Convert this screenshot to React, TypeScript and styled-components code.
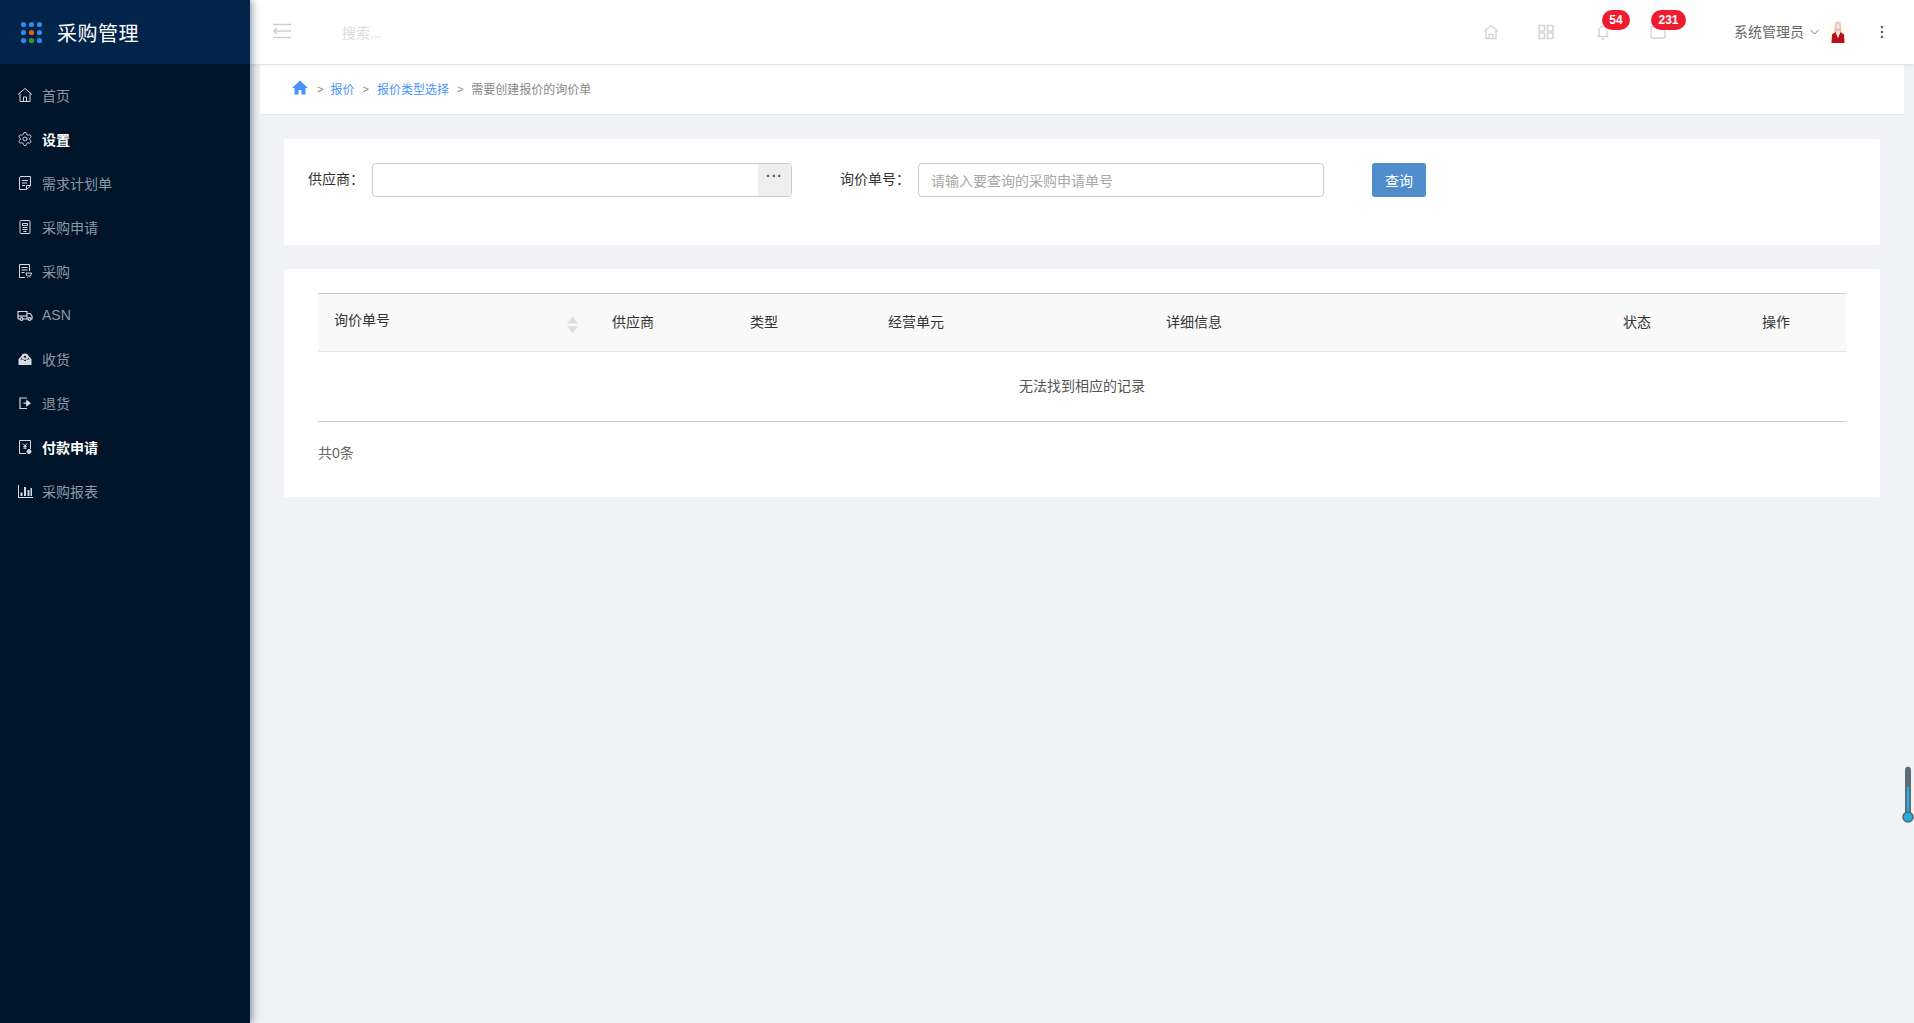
import React from "react";
import styled, { createGlobalStyle } from "styled-components";
import { Settings } from "lucide-react";

const GlobalStyle = createGlobalStyle`
  html, body, #root {
    margin: 0;
    padding: 0;
    height: 100%;
  }
  body {
    background: #f0f2f5;
    font-family: "Liberation Sans", "Noto Sans CJK SC", sans-serif;
    font-size: 14px;
    color: #333;
    overflow: hidden;
  }
  * {
    box-sizing: border-box;
  }
`;

const Page = styled.div`
  display: flex;
  height: 1023px;
  width: 1914px;
  overflow: hidden;
`;

const Sidebar = styled.aside`
  flex: 0 0 250px;
  background: #00152a;
  box-shadow: 2px 0 8px rgba(0, 21, 42, 0.45);
  position: relative;
  z-index: 3;
`;

const Logo = styled.div`
  height: 64px;
  background: #02234a;
  display: flex;
  align-items: center;
  padding-left: 20px;
  gap: 14px;
`;

const LogoTitle = styled.span`
  color: #fff;
  font-size: 20px;
  letter-spacing: 0.5px;
`;

const Menu = styled.nav`
  display: flex;
  flex-direction: column;
  padding-top: 9px;
`;

const MenuItem = styled.a<{ $active?: boolean }>`
  height: 44px;
  display: flex;
  align-items: center;
  padding-left: 17px;
  gap: 9px;
  font-size: 14px;
  color: ${(p) => (p.$active ? "#fff" : "#8d99a6")};
  font-weight: ${(p) => (p.$active ? 700 : 400)};

  svg {
    flex: none;
    width: 16px;
    height: 16px;
    color: #d5dae0;
  }
`;

const Main = styled.main`
  flex: 1;
  min-width: 0;
  display: flex;
  flex-direction: column;
`;

const Header = styled.header`
  height: 64px;
  background: #fff;
  box-shadow: 0 1px 3px rgba(0, 0, 0, 0.08);
  display: flex;
  align-items: center;
  padding-left: 23px;
  position: relative;
  z-index: 2;
`;

const Toggle = styled.svg`
  width: 18px;
  height: 16px;
  margin-top: -2px;
  color: #cfcfcf;
`;

const Search = styled.span`
  margin-left: 51px;
  color: #dcdcdc;
  font-size: 14px;
`;

const HeaderRight = styled.div`
  margin-left: auto;
  display: flex;
  align-items: center;
  height: 100%;
  padding-right: 30px;
`;

const HeadIcon = styled.div<{ $width: number }>`
  position: relative;
  width: ${(p) => p.$width}px;
  height: 20px;
  display: flex;
  align-items: center;

  svg {
    width: 16px;
    height: 16px;
    color: #d2d2d2;
  }
`;

const Badge = styled.span`
  position: absolute;
  left: 7px;
  top: -12px;
  height: 20px;
  min-width: 28px;
  padding: 0 7px;
  border-radius: 10px;
  background: #ee1c2e;
  color: #fff;
  font-size: 12px;
  font-weight: 700;
  line-height: 20px;
  text-align: center;
`;

const WideBadge = styled(Badge)`
  left: 1px;
  min-width: 35px;
`;

const UserName = styled.span`
  color: #666;
  font-size: 14px;
  margin: -2px 0 0 15px;
`;

const Chevron = styled.svg`
  width: 9px;
  height: 6px;
  margin-left: 6px;
  color: #777;
`;

const Avatar = styled.svg`
  width: 24px;
  height: 24px;
  margin-left: 7px;
`;

const MoreDots = styled.svg`
  width: 4px;
  height: 14px;
  margin-left: 30px;
  color: #666;
`;

const Crumbs = styled.div`
  height: 49px;
  margin: 1px 10px 0;
  padding: 0 0 2px 32px;
  background: #fff;
  box-shadow: 0 1px 1px rgba(0, 0, 0, 0.06);
  display: flex;
  align-items: center;
  font-size: 12px;
  color: #888;
`;

const CrumbHome = styled.svg`
  width: 16px;
  height: 15px;
  margin-top: -2px;
  color: #4a93ff;
`;

const CrumbSep = styled.span<{ $first?: boolean }>`
  margin: 0 ${(p) => (p.$first ? 7 : 8)}px 0 ${(p) => (p.$first ? 9 : 8)}px;
  font-size: 11px;
  color: #888;
`;

const CrumbLink = styled.a`
  color: #4a93ff;
`;

const Content = styled.div`
  padding: 25px 34px 0;
  display: flex;
  flex-direction: column;
  gap: 24px;
`;

const Card = styled.section`
  background: #fff;
  border-radius: 2px;
`;

const FilterCard = styled(Card)`
  height: 106px;
  padding: 24px;
  display: flex;
  align-items: flex-start;
`;

const FieldLabel = styled.label`
  line-height: 32px;
  color: #333;
  white-space: nowrap;
`;

const LookupBox = styled.div`
  width: 420px;
  height: 34px;
  margin-left: 8px;
  border: 1px solid #ccc;
  border-radius: 4px;
  display: flex;
  justify-content: flex-end;
  overflow: hidden;
`;

const LookupBtn = styled.span`
  width: 33px;
  background: #eeeeee;
  color: #555;
  text-align: center;
  font-size: 14px;
  font-weight: 700;
  line-height: 25px;
  letter-spacing: 1px;
`;

const OrderField = styled.div`
  margin-left: 48px;
  display: flex;
`;

const OrderInput = styled.input`
  width: 406px;
  height: 34px;
  margin-left: 8px;
  padding: 2px 12px 0;
  border: 1px solid #ccc;
  border-radius: 4px;
  font: inherit;
  outline: none;

  &::placeholder {
    color: #a8a8a8;
  }
`;

const QueryBtn = styled.button`
  width: 54px;
  height: 34px;
  margin-left: 48px;
  border: 0;
  border-radius: 3px;
  background: #4f8ccb;
  color: #fff;
  font: inherit;
`;

const TableCard = styled(Card)`
  height: 228px;
  padding: 24px 34px;
`;

const HeadRow = styled.div`
  height: 59px;
  padding-bottom: 4px;
  display: grid;
  grid-template-columns: 278px 138px 138px 278px 457px 139px 100px;
  align-items: center;
  background: #f9f9f9;
  border-top: 1px solid #ccc;
  border-bottom: 1px solid #e8e8e8;
  color: #333;
`;

const HeadCell = styled.div`
  padding-left: 16px;
`;

const SortCell = styled(HeadCell)`
  display: flex;
  justify-content: space-between;
  padding-right: 17px;
  padding-bottom: 4px;

  svg {
    width: 13px;
    height: 18px;
    margin-top: 7px;
    margin-bottom: -7px;
    color: #dedede;
  }
`;

const EmptyRow = styled.div`
  height: 70px;
  padding-bottom: 4px;
  display: flex;
  align-items: center;
  justify-content: center;
  border-bottom: 1px solid #ccc;
  color: #555;
`;

const Total = styled.div`
  margin-top: 20px;
  color: #666;
`;

const Thermometer = styled.svg`
  position: fixed;
  left: 1902px;
  top: 764px;
  width: 12px;
  height: 62px;
`;

const items: { label: string; icon: React.ReactNode; active?: boolean }[] = [
  {
    label: "首页",
    icon: (
      <svg viewBox="0 0 16 16" fill="none" stroke="currentColor" strokeWidth="1">
        <path d="M1 7.5 8 1.5l7 6M3 6.5V14.5h10V6.5M6.5 14.5V10h3v4.5" />
      </svg>
    ),
  },
  {
    label: "设置",
    active: true,
    icon: <Settings strokeWidth={1.4} />,
  },
  {
    label: "需求计划单",
    icon: (
      <svg viewBox="0 0 16 16" fill="none" stroke="currentColor" strokeWidth="1">
        <path d="M4 1.5h9.5v9.5l-4 3.5H2.5V3A1.5 1.5 0 0 1 4 1.5zM13.5 10.5h-4v4M5 5.5h6M5 8h5M5 10.5h3" />
      </svg>
    ),
  },
  {
    label: "采购申请",
    icon: (
      <svg viewBox="0 0 16 16" fill="none" stroke="currentColor" strokeWidth="1">
        <rect x="3" y="1.5" width="10" height="13" rx="1" />
        <path d="M5.5 4.5h5v2h-5zM5.5 8.5h5M5.5 10.5h5M6.5 12.5h3" />
      </svg>
    ),
  },
  {
    label: "采购",
    icon: (
      <svg viewBox="0 0 16 16" fill="none" stroke="currentColor" strokeWidth="1">
        <path d="M8 14.5H2.5v-13h10V8M4.5 4.5h6M4.5 7h6M4.5 9.5h3" />
        <path d="M9 10h5.5l-1 3H10zM10.5 15v-.5M13 15v-.5" />
      </svg>
    ),
  },
  {
    label: "ASN",
    icon: (
      <svg viewBox="0 0 16 16" fill="none" stroke="currentColor" strokeWidth="1.2">
        <path d="M3 12H1.500a.5.5 0 0 1-.5-.5V4.500h9V12H6M10 6.500h3l2 2.500v3h-1M10 12h1" />
        <path d="M1 9h9" />
        <circle cx="4.500" cy="12" r="1.400" />
        <circle cx="12.500" cy="12" r="1.400" />
      </svg>
    ),
  },
  {
    label: "收货",
    icon: (
      <svg viewBox="0 0 16 16" fill="currentColor">
        <path d="M1.500 8 4 5.500h1.800L3.500 8.500h3l1 1.500h1l1-1.500h3l-2.300-3H12L14.500 8v6h-13z" />
        <path d="M8 2.500a3.800 3.800 0 0 1 3.800 3.800A3.800 3.800 0 0 1 8 9a3.800 3.800 0 0 1-3.800-2.700A3.800 3.800 0 0 1 8 2.500zm0 2L6.300 6.300h1.200v1h1v-1h1.200z" fillRule="evenodd" />
      </svg>
    ),
  },
  {
    label: "退货",
    icon: (
      <svg viewBox="0 0 16 16" fill="none" stroke="currentColor" strokeWidth="1.2">
        <path d="M10 3H3v10.500h7" />
        <path d="M6.500 8.200h5M9.800 5.800l3.200 2.400-3.200 2.400z" fill="currentColor" />
      </svg>
    ),
  },
  {
    label: "付款申请",
    active: true,
    icon: (
      <svg viewBox="0 0 16 16" fill="none" stroke="currentColor" strokeWidth="1">
        <path d="M9 14.500H2.500v-13h11V10" />
        <path d="M6 4.500 8 7l2-2.500M8 7v3M6.300 7.500h3.400M6.300 9.200h3.400" />
        <circle cx="12" cy="12.500" r="2" fill="currentColor" />
      </svg>
    ),
  },
  {
    label: "采购报表",
    icon: (
      <svg viewBox="0 0 16 16" fill="currentColor">
        <path d="M1 2h1v12h14v1H1z" />
        <path d="M3.500 9.500h2V13h-2zM7 4h2v9H7zM10.500 7h2v6h-2zM13.500 5H15v8h-1.500z" />
      </svg>
    ),
  },
];

const logoDots = [
  "#2a8cf0", "#2a8cf0", "#2a8cf0",
  "#2a8cf0", "#e8600a", "#2a8cf0",
  "#2a8cf0", "#3b9a2a", "#2a8cf0",
];

const columns = ["供应商", "类型", "经营单元", "详细信息", "状态", "操作"];

export default function App() {
  return (
    <>
      <GlobalStyle />
      <Page>
        <Sidebar>
          <Logo>
            <svg width="23" height="23" viewBox="0 0 23 23">
              {logoDots.map((c, i) => (
                <circle
                  key={i}
                  cx={3.5 + (i % 3) * 8}
                  cy={3.5 + Math.floor(i / 3) * 8}
                  r="2.6"
                  fill={c}
                />
              ))}
            </svg>
            <LogoTitle>采购管理</LogoTitle>
          </Logo>
          <Menu>
            {items.map((it) => (
              <MenuItem key={it.label} $active={it.active}>
                {it.icon}
                {it.label}
              </MenuItem>
            ))}
          </Menu>
        </Sidebar>

        <Main>
          <Header>
            <Toggle viewBox="0 0 18 16" fill="none" stroke="currentColor" strokeWidth="1.6">
              <path d="M0 1.500h18M5 8h13M0 14.500h18M4 5 1 8l3 3M1 8h4" />
            </Toggle>
            <Search>搜索...</Search>
            <HeaderRight>
              <HeadIcon $width={55}>
                <svg viewBox="0 0 16 16" fill="none" stroke="currentColor" strokeWidth="1.3">
                  <path d="M1 7.500 8 1.500l7 6M3 6.500v8h10v-8M6 14.500v-4h4v4" />
                </svg>
              </HeadIcon>
              <HeadIcon $width={57}>
                <svg viewBox="0 0 16 16" fill="none" stroke="currentColor" strokeWidth="1.5">
                  <rect x="1" y="1.500" width="5.500" height="5.500" rx="0.5" />
                  <rect x="9.500" y="1.500" width="5.500" height="5.500" rx="0.5" />
                  <rect x="1" y="9" width="5.500" height="5.500" rx="0.5" />
                  <rect x="9.500" y="9" width="5.500" height="5.500" rx="0.5" />
                </svg>
              </HeadIcon>
              <HeadIcon $width={55}>
                <svg viewBox="0 0 16 16" fill="none" stroke="currentColor" strokeWidth="1.3">
                  <path d="M2.500 12.500h11M4 12.500V6.500a4 4 0 0 1 8 0v6M6.500 15h3" />
                </svg>
                <Badge>54</Badge>
              </HeadIcon>
              <HeadIcon $width={69}>
                <svg viewBox="0 0 16 16" fill="none" stroke="currentColor" strokeWidth="1.3">
                  <rect x="1" y="2.500" width="14" height="11.500" rx="1" />
                </svg>
                <WideBadge>231</WideBadge>
              </HeadIcon>
              <UserName>系统管理员</UserName>
              <Chevron viewBox="0 0 9 6" fill="none" stroke="currentColor" strokeWidth="1">
                <path d="M.5 1 4.500 5l4-4" />
              </Chevron>
              <Avatar viewBox="0 0 24 24">
                <circle cx="12" cy="12" r="12" fill="#fffcf2" />
                <path d="M12 1.500c-2 0-3 1.500-3 4 0 3-.8 5-.8 7h7.600c0-2-.8-4-.8-7 0-2.500-1-4-3-4z" fill="#e4c4b8" />
                <path d="M12 3.500c-1.200 0-1.700 1.200-1.700 2.700 0 1.500.7 2.800 1.700 2.800s1.700-1.300 1.700-2.800c0-1.500-.5-2.700-1.700-2.700z" fill="#f6e6dc" />
                <path d="M9.500 12 6 14.500 5.500 23h13l-.5-8.500L14.500 12 12 18z" fill="#b5121b" />
                <path d="M10.700 11 12 17.500 13.300 11z" fill="#f4e4dc" />
              </Avatar>
              <MoreDots viewBox="0 0 4 14" fill="currentColor">
                <circle cx="2" cy="2" r="1.3" />
                <circle cx="2" cy="7" r="1.3" />
                <circle cx="2" cy="12" r="1.3" />
              </MoreDots>
            </HeaderRight>
          </Header>

          <Crumbs>
            <CrumbHome viewBox="0 0 16 15" fill="currentColor">
              <path d="M8 .5 0 8h2.500v6.500h4V10h3v4.500h4V8H16z" />
            </CrumbHome>
            <CrumbSep $first>&gt;</CrumbSep>
            <CrumbLink>报价</CrumbLink>
            <CrumbSep>&gt;</CrumbSep>
            <CrumbLink>报价类型选择</CrumbLink>
            <CrumbSep>&gt;</CrumbSep>
            <span>需要创建报价的询价单</span>
          </Crumbs>

          <Content>
            <FilterCard>
              <FieldLabel>供应商：</FieldLabel>
              <LookupBox>
                <LookupBtn>···</LookupBtn>
              </LookupBox>
              <OrderField>
                <FieldLabel>询价单号：</FieldLabel>
                <OrderInput placeholder="请输入要查询的采购申请单号" />
              </OrderField>
              <QueryBtn>查询</QueryBtn>
            </FilterCard>

            <TableCard>
              <HeadRow>
                <SortCell>
                  询价单号
                  <svg viewBox="0 0 12 18" fill="currentColor">
                    <path d="M6 0l5.500 7.500H.5zM.5 10h11L6 17.500z" />
                  </svg>
                </SortCell>
                {columns.map((c) => (
                  <HeadCell key={c}>{c}</HeadCell>
                ))}
              </HeadRow>
              <EmptyRow>无法找到相应的记录</EmptyRow>
              <Total>共0条</Total>
            </TableCard>
          </Content>
        </Main>
      </Page>

      <Thermometer viewBox="0 0 12 62">
        <rect x="3.500" y="3" width="5" height="50" rx="2.5" fill="#5c6b78" stroke="#5c6b78" />
        <rect x="4.800" y="23" width="2.400" height="31" fill="#29abe2" />
        <circle cx="6" cy="53" r="5" fill="#29abe2" stroke="#55636f" strokeWidth="1.5" />
      </Thermometer>
    </>
  );
}
